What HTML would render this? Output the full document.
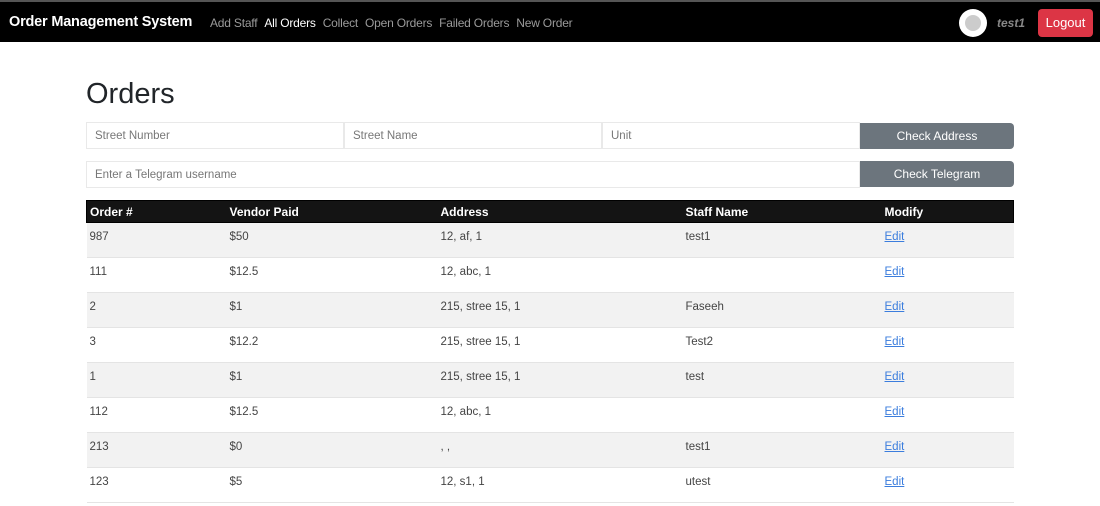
<!DOCTYPE html>
<html><head><meta charset="utf-8"><style>
*{box-sizing:border-box;margin:0;padding:0}
body{width:1100px;height:506px;overflow:hidden;background:#fff;font-family:"Liberation Sans",sans-serif;color:#212529;position:relative}
.nav{position:absolute;left:0;top:0;width:1100px;height:42px;background:#000;border-top:2px solid #555}
.brand{position:absolute;left:9px;top:12px;color:#fff;font-weight:bold;font-size:14.5px;letter-spacing:-0.2px}
.links{position:absolute;left:210px;top:14px;font-size:12px;color:#9a9a9a;letter-spacing:-0.2px;white-space:nowrap}
.links span{margin-right:7px}
.links .a{color:#fff}
.av{position:absolute;left:959px;top:7px;width:28px;height:28px;border-radius:50%;background:#fff}
.av:after{content:"";position:absolute;left:6px;top:6px;width:16px;height:16px;border-radius:50%;background:#ccc}
.user{position:absolute;left:997px;top:14px;color:#888;font-style:italic;font-weight:bold;font-size:12px}
.logout{position:absolute;left:1038px;top:7px;width:55px;height:28px;background:#dc3545;border-radius:4px;color:#fff;font-size:13px;text-align:center;line-height:28px}
h1{position:absolute;left:86px;top:78px;font-size:29px;font-weight:normal}
.in{position:absolute;height:27px;border:1px solid #e9e9e9;font-size:11.5px;color:#777;padding-left:8px;line-height:27px}
.btn{position:absolute;left:860px;width:154px;height:26px;background:#6c757d;border-radius:0 4px 4px 0;color:#fff;font-size:12px;text-align:center;line-height:26px}
table{position:absolute;left:86px;top:200px;width:928px;border-collapse:collapse;font-size:11.5px}
th{background:#141414;color:#fff;text-align:left;height:22px;font-size:12px;padding-left:3px;border-top:1px solid #000;border-bottom:1px solid #000}
th:first-child{border-left:1px solid #000}
th:last-child{border-right:1px solid #000}
td{height:35px;vertical-align:top;padding:8px 0 0 3px;border-bottom:1px solid #e4e4e4;color:#444}
tr:nth-child(odd) td{background:#f2f2f2}
td a{color:#3b7ddd;text-decoration:underline}
</style></head><body>
<div class="nav"><div class="brand">Order Management System</div>
<div class="links"><span>Add Staff</span><span class="a">All Orders</span><span>Collect</span><span>Open Orders</span><span>Failed Orders</span><span>New Order</span></div>
<div class="av"></div><div class="user">test1</div><div class="logout">Logout</div></div>
<h1>Orders</h1>
<div class="in" style="left:86px;top:122px;width:258px">Street Number</div>
<div class="in" style="left:344px;top:122px;width:258px">Street Name</div>
<div class="in" style="left:602px;top:122px;width:258px">Unit</div>
<div class="btn" style="top:123px">Check Address</div>
<div class="in" style="left:86px;top:161px;width:774px">Enter a Telegram username</div>
<div class="btn" style="top:161px">Check Telegram</div>
<table>
<thead><tr><th style="width:140px">Order #</th><th style="width:211px">Vendor Paid</th><th style="width:245px">Address</th><th style="width:199px">Staff Name</th><th>Modify</th></tr></thead>
<tbody>
<tr><td>987</td><td>$50</td><td>12, af, 1</td><td>test1</td><td><a>Edit</a></td></tr>
<tr><td>111</td><td>$12.5</td><td>12, abc, 1</td><td></td><td><a>Edit</a></td></tr>
<tr><td>2</td><td>$1</td><td>215, stree 15, 1</td><td>Faseeh</td><td><a>Edit</a></td></tr>
<tr><td>3</td><td>$12.2</td><td>215, stree 15, 1</td><td>Test2</td><td><a>Edit</a></td></tr>
<tr><td>1</td><td>$1</td><td>215, stree 15, 1</td><td>test</td><td><a>Edit</a></td></tr>
<tr><td>112</td><td>$12.5</td><td>12, abc, 1</td><td></td><td><a>Edit</a></td></tr>
<tr><td>213</td><td>$0</td><td>, ,</td><td>test1</td><td><a>Edit</a></td></tr>
<tr><td>123</td><td>$5</td><td>12, s1, 1</td><td>utest</td><td><a>Edit</a></td></tr>
</tbody></table>
</body></html>
